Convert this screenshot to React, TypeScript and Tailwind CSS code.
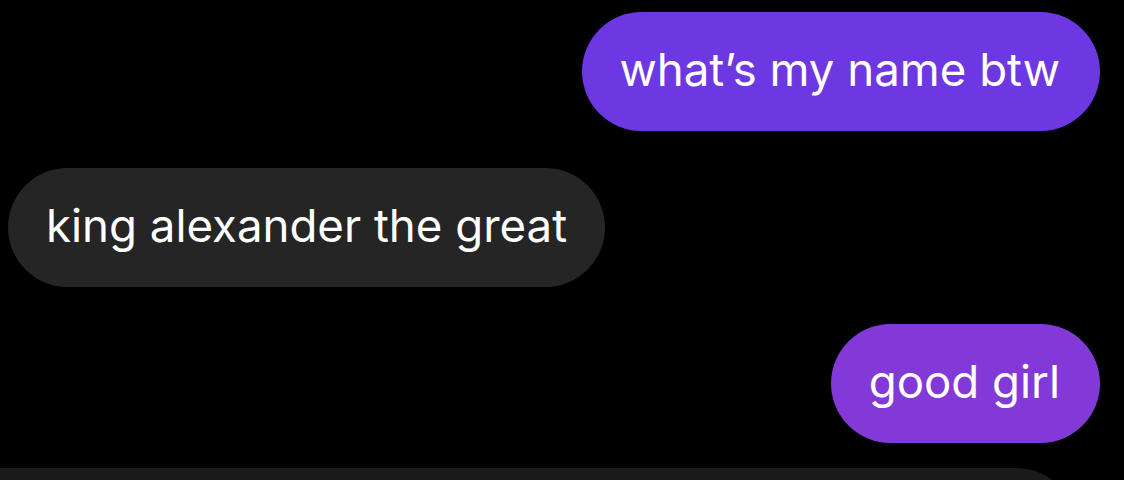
export default function App() {
    return (
        <div className="w-[1124px] h-[480px] overflow-hidden bg-black flex flex-col pt-[12px]" style={{ fontFamily: 'Inter, "Noto Sans", sans-serif' }}>
            <div className="flex justify-end pr-[24px]">
                <div className="h-[119px] flex items-center pl-[38px] pr-[40px] pb-[2px] rounded-full bg-[#6d38e1] text-white text-[45.6px]">
                    what’s my name btw
                </div>
            </div>

            <div className="flex justify-start pl-[8px] mt-[37px]">
                <div className="h-[119px] flex items-center pl-[38px] pr-[38px] pb-[2px] rounded-full bg-[#252525] text-white text-[45.6px]">
                    king alexander the great
                </div>
            </div>

            <div className="flex justify-end pr-[24px] mt-[37px]">
                <div className="h-[119px] flex items-center pl-[38px] pr-[40px] pb-[2px] rounded-full bg-[#8239d7] text-white text-[45.6px]">
                    good girl
                </div>
            </div>

            <div className="mt-[25px] w-[1076px] h-[119px] shrink-0 rounded-r-[60px] bg-[#1a1a1a]" />
        </div>
    );
}
